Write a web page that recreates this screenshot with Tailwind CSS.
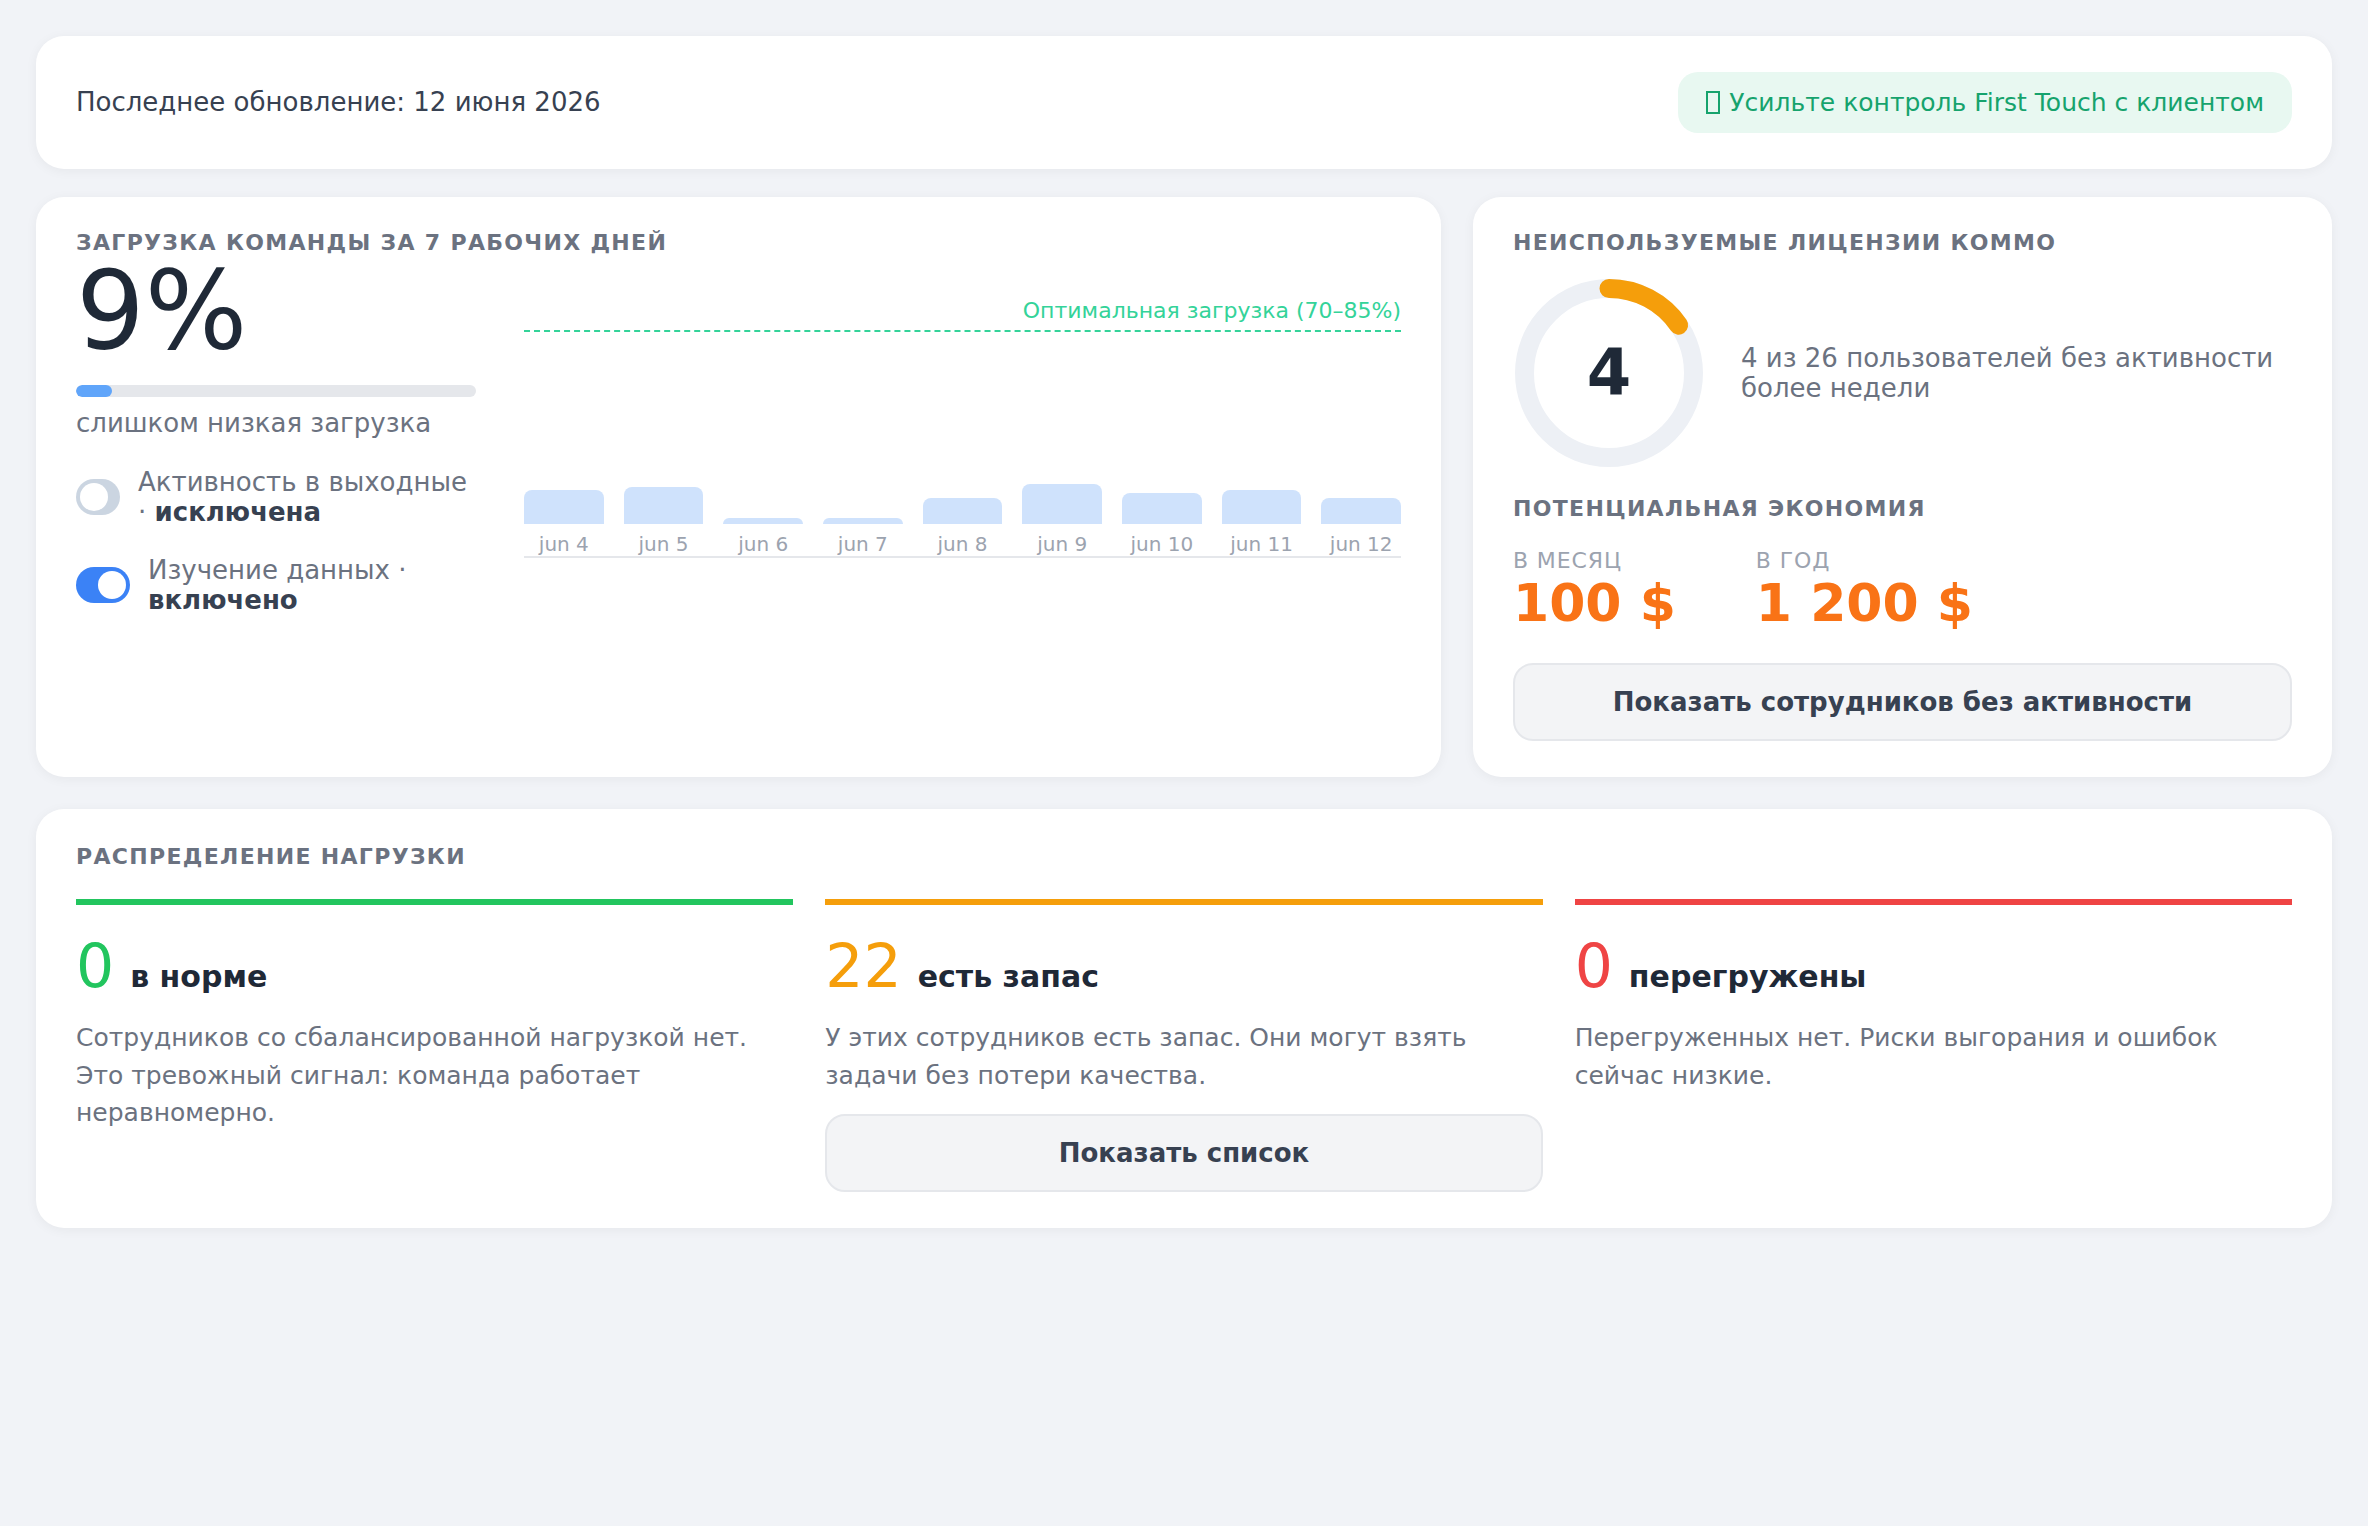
<!DOCTYPE html>
<html lang="ru">
<head>
  <meta charset="UTF-8" />
  <meta name="viewport" content="width=device-width, initial-scale=1.0" />
  <title>Загрузка команды</title>
  <script src="https://cdn.jsdelivr.net/npm/@tailwindcss/browser@4"></script>
</head>
<body class="bg-[#f1f3f7] min-h-screen font-['DejaVu_Sans',sans-serif] text-[#1f2937]">
  <main class="p-[36px]">

    <!-- header -->
    <section class="mb-[28px] bg-white rounded-[28px] shadow-[0_2px_12px_rgba(0,0,0,0.05)] px-[40px] py-[36px] flex items-center justify-between">
      <div class="text-[26px] text-[#374151]">Последнее обновление: 12 июня 2026</div>
      <div class="bg-[#e8f8f1] text-[#16a36d] text-[25px] rounded-[20px] px-[28px] h-[61px] flex items-center gap-[9px]">
        <span class="w-[14px] h-[23px] border-2 border-[#16a36d]"></span>
        <span>Усильте контроль First Touch с клиентом</span>
      </div>
    </section>

    <div class="grid grid-cols-[1405px_859px] gap-[32px] mb-[32px]">
      <!-- team load -->
      <section class="bg-white rounded-[28px] shadow-[0_2px_12px_rgba(0,0,0,0.05)] px-[40px] pt-[32px] pb-[36px]">
        <h2 class="text-[22px] leading-[28px] font-bold tracking-[0.06em] text-[#6b7280]">ЗАГРУЗКА КОМАНДЫ ЗА 7 РАБОЧИХ ДНЕЙ</h2>
        <div class="flex gap-[48px]">
          <div class="w-[400px] shrink-0">
            <div class="text-[108px] leading-[108px] text-[#1f2937]">9%</div>
            <div class="mt-[20px] h-[12px] rounded-full bg-[#e5e7eb] overflow-hidden">
              <div class="h-full w-[9%] rounded-full bg-[#60a5fa]"></div>
            </div>
            <div class="mt-[10px] text-[26px] leading-[32px] text-[#6b7280]">слишком низкая загрузка</div>
            <div class="mt-[28px] flex items-center gap-[18px]">
              <div class="relative w-[44px] h-[36px] shrink-0 rounded-full bg-[#cbd5e1]">
                <div class="absolute left-[4px] top-[4px] w-[28px] h-[28px] rounded-full bg-white"></div>
              </div>
              <div class="flex-1 text-[26px] leading-[30px] text-[#6b7280]">Активность в выходные · <b class="text-[#374151]">исключена</b></div>
            </div>
            <div class="mt-[28px] flex items-center gap-[18px]">
              <div class="relative w-[54px] h-[36px] shrink-0 rounded-full bg-[#3b82f6]">
                <div class="absolute right-[4px] top-[4px] w-[28px] h-[28px] rounded-full bg-white"></div>
              </div>
              <div class="flex-1 text-[26px] leading-[30px] text-[#6b7280]">Изучение данных · <b class="text-[#374151]">включено</b></div>
            </div>
          </div>
          <div class="flex-1 pt-[40px]">
            <div class="text-right text-[22px] leading-[28px] text-[#34d399]">Оптимальная загрузка (70–85%)</div>
            <div class="border-b-2 border-dashed border-[#34d399] mt-[5px]"></div>
            <div class="h-[192px] flex items-end gap-[20px]">
              <div class="flex-1 h-[34px] rounded-t-[8px] bg-[#cfe2fc]"></div>
              <div class="flex-1 h-[37px] rounded-t-[8px] bg-[#cfe2fc]"></div>
              <div class="flex-1 h-[6px] rounded-t-[8px] bg-[#cfe2fc]"></div>
              <div class="flex-1 h-[6px] rounded-t-[8px] bg-[#cfe2fc]"></div>
              <div class="flex-1 h-[26px] rounded-t-[8px] bg-[#cfe2fc]"></div>
              <div class="flex-1 h-[40px] rounded-t-[8px] bg-[#cfe2fc]"></div>
              <div class="flex-1 h-[31px] rounded-t-[8px] bg-[#cfe2fc]"></div>
              <div class="flex-1 h-[34px] rounded-t-[8px] bg-[#cfe2fc]"></div>
              <div class="flex-1 h-[26px] rounded-t-[8px] bg-[#cfe2fc]"></div>
            </div>
            <div class="flex gap-[20px] border-b-2 border-[#e5e7eb] h-[34px] pt-[8px] items-center text-[20px] text-[#9ca3af] text-center">
              <div class="flex-1">jun 4</div>
              <div class="flex-1">jun 5</div>
              <div class="flex-1">jun 6</div>
              <div class="flex-1">jun 7</div>
              <div class="flex-1">jun 8</div>
              <div class="flex-1">jun 9</div>
              <div class="flex-1">jun 10</div>
              <div class="flex-1">jun 11</div>
              <div class="flex-1">jun 12</div>
            </div>
          </div>
        </div>
      </section>

      <!-- licenses -->
      <section class="bg-white rounded-[28px] shadow-[0_2px_12px_rgba(0,0,0,0.05)] px-[40px] pt-[32px] pb-[36px]">
        <h2 class="text-[22px] leading-[28px] font-bold tracking-[0.06em] text-[#6b7280]">НЕИСПОЛЬЗУЕМЫЕ ЛИЦЕНЗИИ КОММО</h2>
        <div class="mt-[20px] flex items-center gap-[36px]">
          <div class="relative w-[192px] h-[192px] shrink-0">
            <svg viewBox="0 0 192 192" class="w-full h-full -rotate-90">
              <circle cx="96" cy="96" r="84.5" fill="none" stroke="#edf0f5" stroke-width="19" />
              <circle cx="96" cy="96" r="84.5" fill="none" stroke="#f59e0b" stroke-width="19" stroke-linecap="round" stroke-dasharray="81.7 531" />
            </svg>
            <div class="absolute inset-0 flex items-center justify-center text-[64px] font-bold text-[#1f2937]">4</div>
          </div>
          <div class="text-[26px] leading-[30px] text-[#6b7280]">4 из 26 пользователей без активности более недели</div>
        </div>
        <h2 class="mt-[26px] text-[22px] leading-[28px] font-bold tracking-[0.06em] text-[#6b7280]">ПОТЕНЦИАЛЬНАЯ ЭКОНОМИЯ</h2>
        <div class="mt-[24px] flex gap-[80px]">
          <div>
            <div class="text-[22px] leading-[28px] text-[#9ca3af] tracking-[0.04em]">В МЕСЯЦ</div>
            <div class="text-[52px] leading-[56px] font-bold text-[#f97316]">100 $</div>
          </div>
          <div>
            <div class="text-[22px] leading-[28px] text-[#9ca3af] tracking-[0.04em]">В ГОД</div>
            <div class="text-[52px] leading-[56px] font-bold text-[#f97316]">1 200 $</div>
          </div>
        </div>
        <button class="mt-[32px] w-full h-[78px] rounded-[20px] border-2 border-[#e5e7eb] bg-[#f3f4f6] text-[26px] font-bold text-[#374151]">Показать сотрудников без активности</button>
      </section>
    </div>

    <!-- distribution -->
    <section class="bg-white rounded-[28px] shadow-[0_2px_12px_rgba(0,0,0,0.05)] px-[40px] pt-[34px] pb-[36px]">
      <h2 class="text-[22px] leading-[28px] font-bold tracking-[0.06em] text-[#6b7280]">РАСПРЕДЕЛЕНИЕ НАГРУЗКИ</h2>
      <div class="mt-[28px] grid grid-cols-3 gap-[32px]">
        <div class="border-t-[6px] border-[#22c55e] pt-[26px]">
          <div class="flex items-baseline gap-[16px]">
            <span class="text-[60px] leading-[70px] text-[#22c55e]">0</span>
            <span class="text-[30px] font-bold text-[#1f2937]">в норме</span>
          </div>
          <p class="mt-[18px] text-[25px] leading-[37.5px] text-[#6b7280]">Сотрудников со сбалансированной нагрузкой нет. Это тревожный сигнал: команда работает неравномерно.</p>
        </div>
        <div class="border-t-[6px] border-[#f59e0b] pt-[26px]">
          <div class="flex items-baseline gap-[16px]">
            <span class="text-[60px] leading-[70px] text-[#f59e0b]">22</span>
            <span class="text-[30px] font-bold text-[#1f2937]">есть запас</span>
          </div>
          <p class="mt-[18px] text-[25px] leading-[37.5px] text-[#6b7280]">У этих сотрудников есть запас. Они могут взять задачи без потери качества.</p>
          <button class="mt-[20px] w-full h-[78px] rounded-[20px] border-2 border-[#e5e7eb] bg-[#f3f4f6] text-[26px] font-bold text-[#374151]">Показать список</button>
        </div>
        <div class="border-t-[6px] border-[#ef4444] pt-[26px]">
          <div class="flex items-baseline gap-[16px]">
            <span class="text-[60px] leading-[70px] text-[#ef4444]">0</span>
            <span class="text-[30px] font-bold text-[#1f2937]">перегружены</span>
          </div>
          <p class="mt-[18px] text-[25px] leading-[37.5px] text-[#6b7280]">Перегруженных нет. Риски выгорания и ошибок сейчас низкие.</p>
        </div>
      </div>
    </section>
  </main>
</body>
</html>
